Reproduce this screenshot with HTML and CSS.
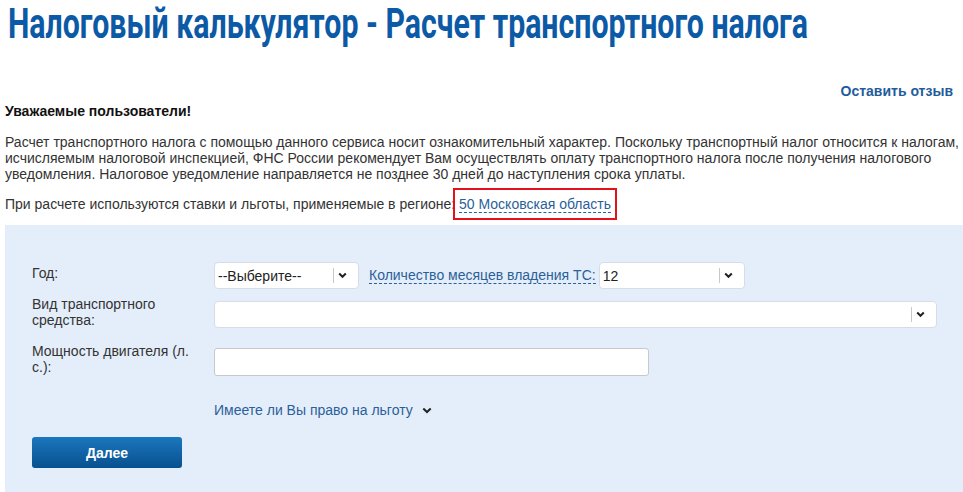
FILE: index.html
```html
<!DOCTYPE html>
<html lang="ru">
<head>
<meta charset="utf-8">
<title>Налоговый калькулятор</title>
<link rel="stylesheet" href="styles.css">
</head>
<body>
<div class="page">
  <h1 class="title"><svg class="title-svg" width="950" height="52" viewBox="0 0 950 52"><text class="title-text" x="3" y="27.14" transform="scale(1,1.4)" textLength="800" lengthAdjust="spacingAndGlyphs">Налоговый калькулятор - Расчет транспортного налога</text></svg></h1>
  <div class="feedback"><a href="#" class="feedback-link">Оставить отзыв</a></div>
  <p class="greeting">Уважаемые пользователи!</p>
  <p class="notice">Расчет транспортного налога с помощью данного сервиса носит ознакомительный характер. Поскольку транспортный налог относится к налогам, исчисляемым налоговой инспекцией, ФНС России рекомендует Вам осуществлять оплату транспортного налога после получения налогового уведомления. Налоговое уведомление направляется не позднее 30 дней до наступления срока уплаты.</p>
  <p class="region">При расчете используются ставки и льготы, применяемые в регионе: <span class="region-box"><a href="#" class="dashed">50 Московская область</a></span></p>

  <div class="panel">
    <div class="row row-year">
      <div class="label">Год:</div>
      <div class="control">
        <div class="select sel-year">
          <span class="select-value">--Выберите--</span>
          <span class="select-sep"></span>
          <svg class="chev" width="9" height="7" viewBox="0 0 9 7"><path d="M1.2 1.5 L4.5 4.8 L7.8 1.5" fill="none" stroke="#222" stroke-width="2"/></svg>
        </div>
        <a href="#" class="dashed months-link">Количество месяцев владения ТС:</a>
        <div class="select sel-months">
          <span class="select-value">12</span>
          <span class="select-sep"></span>
          <svg class="chev" width="9" height="7" viewBox="0 0 9 7"><path d="M1.2 1.5 L4.5 4.8 L7.8 1.5" fill="none" stroke="#222" stroke-width="2"/></svg>
        </div>
      </div>
    </div>
    <div class="row row-type">
      <div class="label">Вид транспортного средства:</div>
      <div class="control">
        <div class="select sel-type">
          <span class="select-value"></span>
          <span class="select-sep"></span>
          <svg class="chev" width="9" height="7" viewBox="0 0 9 7"><path d="M1.2 1.5 L4.5 4.8 L7.8 1.5" fill="none" stroke="#222" stroke-width="2"/></svg>
        </div>
      </div>
    </div>
    <div class="row row-power">
      <div class="label">Мощность двигателя (л. с.):</div>
      <div class="control">
        <div class="text-input"></div>
      </div>
    </div>
    <div class="benefit">
      <a href="#" class="benefit-link">Имеете ли Вы право на льготу</a>
      <svg class="benefit-chev" width="10" height="7" viewBox="0 0 10 7"><path d="M1.3 1.5 L5 5 L8.7 1.5" fill="none" stroke="#222" stroke-width="2"/></svg>
    </div>
    <button class="btn-next" type="button">Далее</button>
  </div>
</div>
</body>
</html>
```
FILE: styles.css
```css
html, body {
  margin: 0;
  padding: 0;
  background: #ffffff;
}

body {
  font-family: "Liberation Sans", Arial, sans-serif;
  font-size: 14px;
  color: #222222;
  overflow: hidden;
}

.page {
  padding-left: 5px;
}

.title {
  margin: 0;
  padding: 0;
  height: 52px;
  line-height: 0;
}

.title-svg {
  display: block;
  margin-left: 0;
}

.title-text {
  font-family: Roboto, "DejaVu Sans", sans-serif;
  font-weight: 700;
  font-size: 30px;
  fill: #0c5aa6;
}

.feedback {
  margin-top: 31px;
  padding-right: 10px;
  text-align: right;
  line-height: 16px;
}

.feedback-link {
  font-weight: 700;
  font-size: 14px;
  color: #1f5c9b;
  text-decoration: none;
}

.greeting {
  margin: 4px 0 0;
  font-weight: 700;
  font-size: 14px;
  line-height: 16px;
  color: #111;
}

.notice {
  margin: 15px 0 0;
  line-height: 16px;
  color: #333;
}

.region {
  margin: 14px 0 0;
  line-height: 16px;
  color: #333;
}

.region-box {
  display: inline-block;
  border: 2px solid #e3111b;
  padding: 6px 4px 6px 4px;
  margin: -8px 0 0 -6px;
  vertical-align: top;
}

.dashed {
  color: #2b5f99;
  text-decoration: none;
  border-bottom: 1px dashed #2b5f99;
}

.panel {
  margin-top: 5px;
  background: #e4eefa;
  padding: 37px 0 40px 27px;
  min-height: 300px;
}

.row {
  display: flex;
  align-items: center;
}

.row-type { margin-top: 7px; }
.row-power { margin-top: 10px; }

.label {
  width: 182px;
  flex: 0 0 182px;
  padding-bottom: 5px;
  padding-right: 16px;
  box-sizing: border-box;
  line-height: 16px;
  color: #333;
}

.control {
  display: flex;
  align-items: center;
}

.select {
  box-sizing: border-box;
  height: 27px;
  background: #fff;
  border: 1px solid #d6dde6;
  border-radius: 4px;
  display: flex;
  align-items: center;
  padding-left: 3px;
}

.select-value {
  flex: 1;
  color: #222;
  line-height: 16px;
}

.select-sep {
  width: 1px;
  height: 15px;
  background: #c9c9c9;
  margin-right: 4px;
}

.chev {
  margin-right: 11px;
  display: block;
}

.sel-year { width: 145px; }
.sel-months { width: 146px; margin-left: 3px; }
.sel-type { width: 723px; }

.months-link {
  margin-left: 10px;
  line-height: 16px;
}

.text-input {
  box-sizing: border-box;
  width: 435px;
  height: 28px;
  background: #fff;
  border: 1px solid #c6c9cc;
  border-radius: 3px;
}

.benefit {
  margin: 22px 0 0 182px;
  display: flex;
  align-items: center;
  line-height: 16px;
}

.benefit-link {
  color: #2b5f99;
  text-decoration: none;
}

.benefit-chev {
  margin-left: 9px;
  display: block;
}

.btn-next {
  display: block;
  margin-top: 19px;
  width: 150px;
  height: 31px;
  border: 0;
  border-radius: 3px;
  background: linear-gradient(#1c77be, #07508f);
  color: #ffffff;
  font-family: "Liberation Sans", Arial, sans-serif;
  font-weight: 700;
  font-size: 14px;
  padding: 0;
}
```
